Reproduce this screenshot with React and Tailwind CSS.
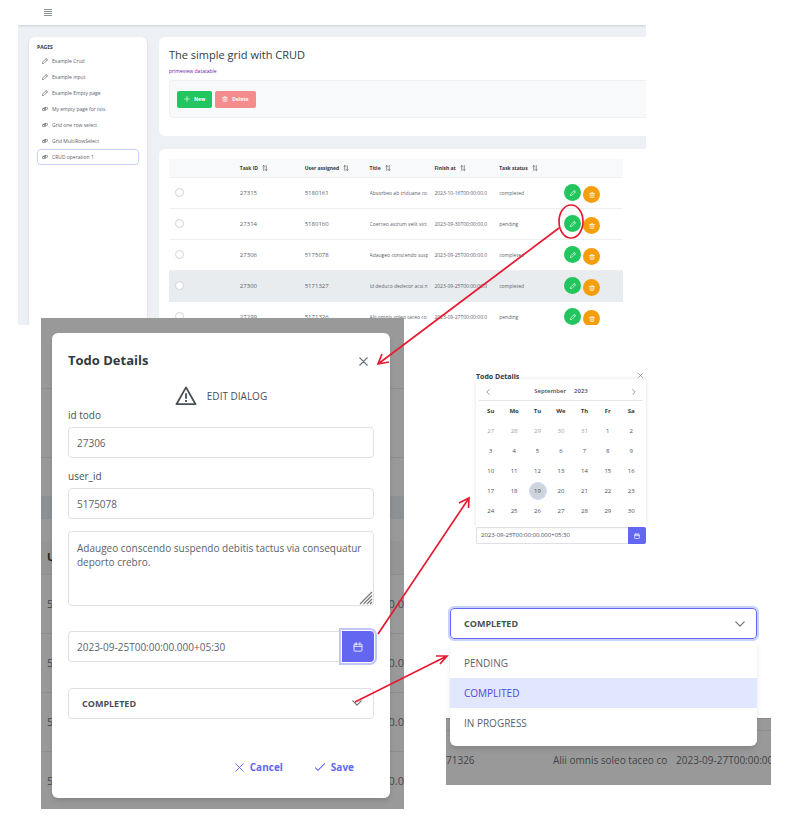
import React from "react";

const pages = [
  { name: "Example Crud", icon: "pencil" },
  { name: "Example input", icon: "pencil" },
  { name: "Example Empty page", icon: "pencil" },
  { name: "My empty page for tsts", icon: "link" },
  { name: "Grid one row select", icon: "link" },
  { name: "Grid MultiRowSelect", icon: "link" },
  { name: "CRUD operation 1", icon: "link", active: true },
];

const columns = ["Task ID", "User assigned", "Title", "Finish at", "Task status"];

const tasks = [
  ["27315", "5180161", "Absorbeo ab triduana co", "2023-10-16T00:00:00.0", "completed"],
  ["27314", "5180160", "Coerceo astrum velit vict", "2023-09-30T00:00:00.0", "pending"],
  ["27306", "5175078", "Adaugeo conscendo susp", "2023-09-25T00:00:00.0", "completed"],
  ["27300", "5171327", "Id deduco dedecor acsi n", "2023-09-25T00:00:00.0", "completed"],
  ["27299", "5171326", "Alii omnis soleo taceo co", "2023-09-27T00:00:00.0", "pending"],
];

const weekdays = ["Su", "Mo", "Tu", "We", "Th", "Fr", "Sa"];
const weeks = [
  [27, 28, 29, 30, 31, 1, 2],
  [3, 4, 5, 6, 7, 8, 9],
  [10, 11, 12, 13, 14, 15, 16],
  [17, 18, 19, 20, 21, 22, 23],
  [24, 25, 26, 27, 28, 29, 30],
];

function Icon({ className, children, width = 1.5 }) {
  return (
    <svg viewBox="0 0 24 24" className={className} fill="none" stroke="currentColor" strokeWidth={width} strokeLinecap="round" strokeLinejoin="round" aria-hidden="true">
      {children}
    </svg>
  );
}

const Pencil = (p) => (
  <Icon {...p}>
    <path d="M2 22l1.3-6.500L16.600 2.200a2 2 0 0 1 2.800 0l2.400 2.400a2 2 0 0 1 0 2.800L8.500 20.700z" />
    <path d="M14.500 4.500l5 5" />
  </Icon>
);
const LinkIcon = (p) => (
  <Icon {...p}>
    <g transform="rotate(-12 12 12)">
      <rect x="1" y="8.500" width="14" height="9" rx="4.500" />
      <rect x="9" y="6.500" width="14" height="9" rx="4.500" />
    </g>
  </Icon>
);
const Trash = (p) => (
  <Icon {...p}>
    <path d="M2 6h20M4.500 6v14a2 2 0 0 0 2 2h11a2 2 0 0 0 2-2V6M8 6V3.500A1.500 1.500 0 0 1 9.500 2h5A1.500 1.500 0 0 1 16 3.500V6M9.500 11v6M14.500 11v6" />
  </Icon>
);
const Calendar = (p) => (
  <Icon {...p}>
    <rect x="2.500" y="5" width="19" height="17" rx="2" />
    <path d="M2.500 10.500h19M7.500 1.500v6M16.500 1.500v6" />
  </Icon>
);
const Close = (p) => (
  <Icon {...p}>
    <path d="M2 2l20 20M22 2L2 22" />
  </Icon>
);
const Chevron = (p) => (
  <Icon {...p}>
    <path d="M2 7l10 10L22 7" />
  </Icon>
);
const Sort = (p) => (
  <Icon {...p}>
    <path d="M7 22V2M3.500 5.500L7 2l3 3.500M17 2v20M14 18.500l3 3.500 3.500-3.500" />
  </Icon>
);

function Sidebar() {
  return (
    <nav className="mt-3 w-[118px] shrink-0 rounded-t-md bg-white px-2 pt-1.5 shadow-sm">
      <h2 className="text-[5px] leading-2 font-bold text-[#343a40]">PAGES</h2>
      <ul className="mt-0.5">
        {pages.map((p) => (
          <li key={p.name} className="h-4">
            <a
              href="#page"
              className={
                p.active
                  ? "flex h-4 items-center gap-1 rounded-sm border border-[#c7d2fe] px-1"
                  : "flex h-4 items-center gap-1 rounded-sm border border-transparent px-1"
              }
            >
              {p.icon === "pencil" ? (
                <Pencil className="size-1.5" width={2.5} />
              ) : (
                <LinkIcon className="size-1.5" width={2.5} />
              )}
              <span className="whitespace-nowrap">{p.name}</span>
            </a>
          </li>
        ))}
      </ul>
    </nav>
  );
}

function TaskTable() {
  return (
    <table className="w-full table-fixed border-collapse text-left">
      <thead>
        <tr className="h-[18px] border-b border-[#eef0f2] bg-[#f8f9fa] text-[#343a40]">
          <th aria-label="Select" />
          {columns.map((c) => (
            <th key={c} className="pl-1.5">
              <button type="button" className="flex items-center gap-1 font-bold whitespace-nowrap">
                {c}
                <Sort className="size-1.5 text-[#495057]" width={2.5} />
              </button>
            </th>
          ))}
          <th aria-label="Actions" />
        </tr>
      </thead>
      <tbody>
        {tasks.map((t, i) => (
          <tr
            key={t[0]}
            className={
              i === 3 ? "h-[31px] border-b border-[#e9ecef] bg-[#e9ecef]" : "h-[31px] border-b border-[#eceef0]"
            }
          >
            <td className="pl-1.5">
              <input
                type="radio"
                name="task"
                aria-label={t[0]}
                className="block size-[9px] appearance-none rounded-full border border-[#ced4da] bg-white"
              />
            </td>
            {t.map((v) => (
              <td key={v} className="pl-1.5">
                <div
                  className={
                    /^\d+$/.test(v)
                      ? "overflow-hidden text-[6px] leading-2 whitespace-nowrap"
                      : "overflow-hidden whitespace-nowrap"
                  }
                >
                  {v}
                </div>
              </td>
            ))}
            <td className="pt-0.5 pl-1.5">
              <div className="flex gap-0.5 text-white">
                <button type="button" aria-label="Edit" className="flex size-[17px] items-center justify-center rounded-full bg-[#22c55e]">
                  <Pencil className="size-1.5" width={2.5} />
                </button>
                <button type="button" aria-label="Delete" className="mt-0.5 flex size-[17px] items-center justify-center rounded-full bg-[#f59e0b]">
                  <Trash className="size-1.5" width={2.5} />
                </button>
              </div>
            </td>
          </tr>
        ))}
      </tbody>
    </table>
  );
}

function AppWindow() {
  return (
    <section className="mr-[139px] ml-[18px] h-[325px] overflow-hidden bg-[#edf1f6] text-[5px] leading-2">
      <header className="flex h-[25px] items-center bg-white px-[26px] shadow-sm">
        <button type="button" aria-label="Menu" className="flex w-2 flex-col gap-px">
          <span className="h-px w-full bg-[#8d949b]" />
          <span className="h-px w-full bg-[#8d949b]" />
          <span className="h-px w-full bg-[#8d949b]" />
          <span className="h-px w-full bg-[#8d949b]" />
        </button>
      </header>
      <div className="flex h-[300px] gap-3 pl-[11px]">
        <Sidebar />
        <main className="flex min-w-0 flex-1 flex-col gap-[13px] pt-3">
          <section className="rounded-l-md bg-white pt-2 pb-[18px] pl-2.5">
            <h1 className="text-[11px] leading-5 text-[#343a40]">The simple grid with CRUD</h1>
            <a href="#datatable" className="mt-0.5 block text-[#6b21a8]">
              primeview datatable
            </a>
            <div className="mt-[5px] flex h-[38px] items-center gap-[3px] rounded-l-sm border border-r-0 border-[#eef0f3] bg-[#f8f9fa] px-[7px]">
              <button type="button" className="flex h-[17px] items-center gap-1 rounded-xs bg-[#22c55e] px-[7px] font-bold text-white">
                <Icon className="size-1.5" width={2.5}>
                  <path d="M12 1v22M1 12h22" />
                </Icon>
                New
              </button>
              <button type="button" className="flex h-[17px] items-center gap-1 rounded-xs bg-[#f48c8c] px-[7px] font-bold text-white">
                <Trash className="size-1.5" width={2.5} />
                Delete
              </button>
            </div>
          </section>
          <section className="flex-1 rounded-tl-md bg-white pt-2.5 pr-[23px] pl-2.5">
            <TaskTable />
          </section>
        </main>
      </div>
    </section>
  );
}

function DimmedPage() {
  return (
    <div className="absolute inset-0 overflow-hidden bg-[#999999] text-[11px] text-[#444a4f]" aria-hidden="true">
      <div className="h-[71px] border-b border-[#8c8e90]" />
      <div className="h-[69px] border-b border-[#8c8e90]" />
      <div className="h-[38px]" />
      <div className="h-[23px] bg-[#8e9194]" />
      <div className="h-[22px]" />
      <div className="flex h-[34px] items-center border-b border-[#8c8e90] bg-[#959596] px-1.5 font-bold text-[#1f2326]">
        U
      </div>
      {[0, 1, 2, 3].map((r) => (
        <div key={r} className="flex h-[59px] items-center justify-between border-b border-[#8c8e90] pl-1.5">
          <span>5</span>
          <span>0.0</span>
        </div>
      ))}
    </div>
  );
}

const field = "block h-[31px] w-full rounded-sm border border-[#dde1e6] bg-white px-2 text-[#5b636b] outline-none";

function EditDialog() {
  return (
    <section className="relative h-[491px] px-[11px] pt-[15px] pr-3.5">
      <DimmedPage />
      <div role="dialog" aria-label="Todo Details" className="relative rounded-md bg-white px-4 pt-4 pb-[19px] text-[10px] text-[#495057] shadow-md">
        <div className="flex h-6 items-center justify-between pr-1.5">
          <h2 className="text-[13px] font-bold text-[#343a40]">Todo Details</h2>
          <button type="button" aria-label="Close" className="text-[#6c757d]">
            <Close className="size-[9px]" width={3} />
          </button>
        </div>
        <div className="mt-3 flex h-[22px] items-center justify-center gap-2.5">
          <svg viewBox="0 0 24 22" className="h-5 w-[22px]" fill="none" stroke="#495057" strokeWidth="2" strokeLinejoin="round" aria-hidden="true">
            <path d="M12 1.500L22.500 20h-21z" />
            <path d="M12 8v6M12 15.500v2" />
          </svg>
          <span>EDIT DIALOG</span>
        </div>
        <label htmlFor="todo-id" className="block leading-4">id todo</label>
        <input id="todo-id" defaultValue="27306" className={field + " mt-1"} />
        <label htmlFor="user-id" className="mt-2.5 block leading-4">user_id</label>
        <input id="user-id" defaultValue="5175078" className={field + " mt-1"} />
        <div className="relative mt-3">
          <textarea
            aria-label="Title"
            defaultValue="Adaugeo conscendo suspendo debitis tactus via consequatur deporto crebro."
            className="block h-[75px] w-full resize-none rounded-sm border border-[#dde1e6] bg-white px-2 py-[9px] leading-[14px] text-[#5b636b] outline-none"
          />
          <svg viewBox="0 0 14 14" className="absolute right-px bottom-px size-3.5" stroke="#7a7a7a" strokeWidth="1.200" aria-hidden="true">
            <path d="M1 13L13 1M4.500 13L13 4.500M8 13l5-5M11 13l2-2" />
          </svg>
        </div>
        <div className="mt-[25px] flex">
          <input
            aria-label="Finish at"
            defaultValue="2023-09-25T00:00:00.000+05:30"
            className="h-[31px] min-w-0 flex-1 rounded-l-sm border border-r-0 border-[#dde1e6] bg-white px-2 text-[#5b636b] outline-none"
          />
          <button type="button" aria-label="Choose date" className="flex h-[31px] w-8 items-center justify-center rounded-r-sm bg-[#6366f1] text-white outline-2 outline-offset-1 outline-[#c0c5fb]">
            <Calendar className="size-2.5" width={2} />
          </button>
        </div>
        <div className="relative mt-[26px]">
          <select aria-label="Status" defaultValue="COMPLETED" className="block h-[31px] w-full appearance-none rounded-sm border border-[#dde1e6] bg-white px-[13px] text-[9px] font-bold text-[#495057]">
            <option>PENDING</option>
            <option>COMPLETED</option>
            <option>IN PROGRESS</option>
          </select>
          <Chevron className="pointer-events-none absolute top-2.5 right-3 size-2.5 text-[#6c757d]" width={3} />
        </div>
        <div className="mt-9 flex h-6 justify-end px-1 font-bold text-[#6366f1]">
          <button type="button" className="flex items-center gap-1.5 px-4">
            <Close className="size-[9px]" width={2.5} />
            Cancel
          </button>
          <button type="button" className="flex items-center gap-1.5 px-4">
            <Icon className="size-2.5" width={2.5}>
              <path d="M1 14l6 6L23 4" />
            </Icon>
            Save
          </button>
        </div>
      </div>
    </section>
  );
}

function DatePicker() {
  return (
    <section className="ml-[30px] w-[170px] text-[6px] text-[#495057]">
      <div className="flex h-[7px] items-start justify-between overflow-hidden pr-[3px]">
        <h2 className="text-[7px] leading-[10px] font-bold text-[#343a40]">Todo Details</h2>
        <button type="button" aria-label="Close" className="pt-px text-[#6c757d]">
          <Close className="size-[5px]" width={3} />
        </button>
      </div>
      <div className="h-[148px] px-[3px] pt-1 shadow-[0_0_4px_rgba(0,0,0,0.12)]">
        <div className="flex h-[18px] items-center justify-between border-b border-[#e5e7eb] px-1.5 font-semibold">
          <button type="button" aria-label="Previous month">
            <Chevron className="size-1.5 rotate-90 text-[#6c757d]" width={3} />
          </button>
          <div className="flex gap-2">
            <span>September</span>
            <span>2023</span>
          </div>
          <button type="button" aria-label="Next month">
            <Chevron className="size-1.5 -rotate-90 text-[#6c757d]" width={3} />
          </button>
        </div>
        <table className="w-full table-fixed text-center">
          <thead>
            <tr className="h-5">
              {weekdays.map((d) => (
                <th key={d} className="p-0 font-bold text-[#343a40]">{d}</th>
              ))}
            </tr>
          </thead>
          <tbody>
            {weeks.map((w, i) => (
              <tr key={w[0]} className="h-5">
                {w.map((d) => (
                  <td key={d} className={i === 0 && d > 20 ? "p-0 text-[#9ca3a9]" : "p-0"}>
                    <button
                      type="button"
                      className={
                        d === 19
                          ? "mx-auto block size-4 rounded-full bg-[#ced4da] outline outline-[#c7d2fe]"
                          : "mx-auto block size-4 rounded-full"
                      }
                    >
                      {d}
                    </button>
                  </td>
                ))}
              </tr>
            ))}
          </tbody>
        </table>
      </div>
      <div className="flex h-[17px]">
        <input
          aria-label="Finish at"
          defaultValue="2023-09-25T00:00:00.000+05:30"
          className="min-w-0 flex-1 rounded-l-xs border border-r-0 border-[#dde1e6] px-1 outline-none"
        />
        <button type="button" aria-label="Choose date" className="flex w-[18px] items-center justify-center rounded-r-xs bg-[#6366f1] text-white">
          <Calendar className="size-1.5" width={2.5} />
        </button>
      </div>
    </section>
  );
}

function StatusDropdown() {
  return (
    <section className="relative h-[182px] px-1 pr-3.5 pt-[5px] text-[10px] text-[#5b636b]">
      <div className="absolute inset-x-0 top-[115px] bottom-0 overflow-hidden border-t border-[#8a8a8a] bg-[#999999] text-[#3f4549]" aria-hidden="true">
        <div className="h-3 border-b border-[#8c8e90]" />
        <div className="flex h-[59px] items-center whitespace-nowrap">
          <span className="w-[107px] shrink-0">71326</span>
          <span className="w-[123px] shrink-0">Alii omnis soleo taceo co</span>
          <span>2023-09-27T00:00:00</span>
        </div>
      </div>
      <div className="relative">
        <button type="button" aria-haspopup="listbox" className="flex h-[31px] w-full items-center justify-between rounded-sm border border-[#6366f1] bg-white pr-[11px] pl-[13px] text-[9px] font-bold text-[#495057] outline-2 outline-[#c7d2fe]">
          COMPLETED
          <Chevron className="size-2.5 text-[#6c757d]" width={3} />
        </button>
        <ul role="listbox" aria-label="Status" className="mt-0.5 rounded-b-md bg-white pt-[7px] pb-2 shadow-md">
          <li role="option" aria-selected="false" className="flex h-[30px] items-center px-3.5">PENDING</li>
          <li role="option" aria-selected="true" className="flex h-[30px] items-center bg-[#e0e7ff] px-3.5 text-[#4f46e5]">COMPLITED</li>
          <li role="option" aria-selected="false" className="flex h-[30px] items-center px-3.5">IN PROGRESS</li>
        </ul>
      </div>
    </section>
  );
}

function Arrows() {
  return (
    <svg viewBox="0 0 785 828" preserveAspectRatio="none" className="pointer-events-none absolute inset-0 h-full w-full" fill="none" stroke="#e51c32" strokeWidth="1.700" aria-hidden="true">
      <ellipse cx="571" cy="221.500" rx="12" ry="16.500" />
      <path d="M559 228L378 364M389 362l-11 2 4-10" />
      <path d="M378 634l91-136M459 503l10-5-.5 10" />
      <path d="M355 702l92-46M436 656l11 0-7 8" />
    </svg>
  );
}

export default function App() {
  return (
    <div className="relative bg-white pb-[19px] font-['Open_Sans','Noto_Sans',sans-serif] text-[#5b636b]">
      <AppWindow />
      <div className="-mt-[7px] grid grid-cols-[363fr_325fr] gap-[42px] pr-3.5 pl-[41px]">
        <div className="relative">
          <EditDialog />
        </div>
        <div className="flex flex-col gap-[59px] pt-[54px]">
          <DatePicker />
          <StatusDropdown />
        </div>
      </div>
      <Arrows />
    </div>
  );
}
